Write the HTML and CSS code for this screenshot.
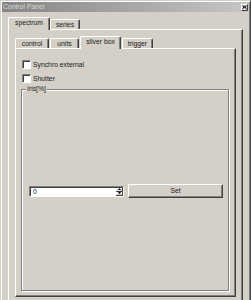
FILE: index.html
```html
<!DOCTYPE html>
<html lang="en">

<head>
    <meta charset="UTF-8">
    <meta name="viewport" content="width=device-width, initial-scale=1.0">
    <title>Control Panel</title>
    <link rel="stylesheet" href="styles.css">
</head>

<body>
    <div class="window">
        <div class="titlebar">
            <span class="title">Control Panel</span>
            <span class="close">
                <svg width="5" height="4" viewBox="0 0 5 4">
                    <path d="M0.5 0.5L4.5 3.5M4.5 0.5L0.5 3.5" stroke="#000" stroke-width="1" fill="none" />
                </svg>
            </span>
        </div>
        <div class="client">
            <div class="tabs">
                <div class="tab active tab-spectrum">spectrum</div>
                <div class="tab tab-series">series</div>
            </div>
            <div class="panel outer-panel">
                <div class="tabs inner-tabs">
                    <div class="tab tab-control">control</div>
                    <div class="tab tab-units">units</div>
                    <div class="tab active tab-silver">silver box</div>
                    <div class="tab tab-trigger">trigger</div>
                </div>
                <div class="panel inner-panel">
                    <label class="check"><span class="box"></span>Synchro external</label>
                    <label class="check"><span class="box"></span>Shutter</label>
                    <fieldset class="group">
                        <legend>Iris[%]</legend>
                        <div class="row">
                            <div class="spin">
                                <input type="text" value="0">
                                <div class="spin-buttons">
                                    <span class="spin-btn"><svg width="3" height="2" viewBox="0 0 3 2"><path d="M1.5 0L3 2H0Z" fill="#000" /></svg></span>
                                    <span class="spin-btn"><svg width="3" height="2" viewBox="0 0 3 2"><path d="M0 0H3L1.5 2Z" fill="#000" /></svg></span>
                                </div>
                            </div>
                            <button class="btn">Set</button>
                        </div>
                    </fieldset>
                </div>
            </div>
        </div>
    </div>
</body>

</html>
```

FILE: styles.css
```css
html,
body {
    margin: 0;
    height: 300px;
    overflow: hidden;
}

body {
    background-color: #d4d0c8;
    font-family: "Liberation Sans", Arial, sans-serif;
    font-size: 6.8px;
    color: #1a1a1a;
}

.window {
    width: 251px;
    height: 310px;
    box-sizing: border-box;
    border: 1px solid;
    border-color: #d4d0c8 #404040 #404040 #d4d0c8;
    box-shadow: inset 1px 1px #fff, inset -1px -1px #808080;
    padding: 1px;
    display: flex;
    flex-direction: column;
}

.titlebar {
    height: 10px;
    display: flex;
    align-items: center;
    justify-content: space-between;
    background: linear-gradient(to right, #858585, #c6c6c6);
    padding: 0 1px 0 1px;
}

.title {
    color: #dcdad4;
    line-height: 10px;
}

.close {
    width: 7px;
    height: 7px;
    box-sizing: border-box;
    background-color: #d4d0c8;
    border: 1px solid;
    border-color: #fff #404040 #404040 #fff;
    display: flex;
    align-items: center;
    justify-content: center;
}

.close svg {
    display: block;
}

.client {
    padding: 5px 6px 0 6px;
    display: flex;
    flex-direction: column;
}

.tabs {
    display: flex;
    align-items: flex-end;
    height: 12px;
}

.inner-tabs {
    gap: 1px;
    margin-top: 6px;
}

.tab {
    height: 10px;
    box-sizing: border-box;
    border-top: 1px solid #fff;
    border-left: 1px solid #fff;
    border-right: 1px solid #404040;
    box-shadow: inset -1px 0 #808080;
    border-radius: 2px 2px 0 0;
    background-color: #d4d0c8;
    text-align: center;
    line-height: 9px;
}

.tab.active {
    height: 13px;
    margin-bottom: -1px;
    line-height: 10px;
    position: relative;
    z-index: 1;
}

.tab-spectrum { width: 42px; }
.tab-series { width: 30px; }
.tab-control { width: 34px; }
.tab-units { width: 29px; }
.tab-silver { width: 41px; }
.tab-trigger { width: 31px; }

.panel {
    box-sizing: border-box;
    border: 1px solid;
    border-color: #fff #404040 #404040 #fff;
    box-shadow: inset -1px -1px #808080;
}

.outer-panel {
    width: 235px;
    height: 290px;
    padding: 0 6px;
    display: flex;
    flex-direction: column;
}

.inner-panel {
    width: 221px;
    height: 249px;
    padding: 8px 6px 0 5px;
    display: flex;
    flex-direction: column;
}

.check {
    display: flex;
    align-items: center;
    height: 14px;
    margin-left: 1px;
    align-self: flex-start;
}

.box {
    width: 9px;
    height: 9px;
    box-sizing: border-box;
    background-color: #fff;
    border: 1px solid;
    border-color: #808080 #fff #fff #808080;
    box-shadow: inset 1px 1px #404040;
    margin-right: 2px;
}

.group {
    margin: 0;
    width: 208px;
    height: 206px;
    box-sizing: border-box;
    border: 1px solid #808080;
    box-shadow: inset 1px 1px #fff, 1px 1px #fff;
    padding: 91px 5px 0 7px;
    min-width: 0;
}

.group legend {
    padding: 0 1px;
    margin-left: -3px;
    line-height: 8px;
    background-color: #d4d0c8;
}

.row {
    display: flex;
    align-items: center;
    gap: 4px;
    height: 14px;
}

.spin {
    width: 95px;
    height: 11px;
    box-sizing: border-box;
    display: flex;
    background-color: #fff;
    border: 1px solid;
    border-color: #808080 #fff #fff #808080;
    box-shadow: inset 1px 1px #404040;
}

.spin input {
    flex: 1;
    min-width: 0;
    border: none;
    outline: none;
    background: transparent;
    font-family: inherit;
    font-size: 6.8px;
    color: #1a1a1a;
    padding: 0 0 0 2px;
    margin: 1px 0 0 1px;
    height: 8px;
    line-height: 8px;
}

.spin-buttons {
    width: 7px;
    display: flex;
    flex-direction: column;
    padding: 1px 0 0 0;
}

.spin-btn {
    flex: 1;
    box-sizing: border-box;
    background-color: #d4d0c8;
    border: 1px solid;
    border-width: 0 1px 1px 0;
    border-color: #404040;
    box-shadow: inset 1px 1px #fff;
    display: flex;
    align-items: center;
    justify-content: center;
}

.spin-btn svg {
    display: block;
    width: 3px;
    height: 2px;
}

.btn {
    width: 95px;
    height: 14px;
    box-sizing: border-box;
    padding: 0;
    background-color: #d4d0c8;
    border: 1px solid;
    border-color: #fff #404040 #404040 #fff;
    box-shadow: inset -1px -1px #808080;
    font-family: inherit;
    font-size: 6.8px;
    color: #1a1a1a;
    line-height: 12px;
}
```
